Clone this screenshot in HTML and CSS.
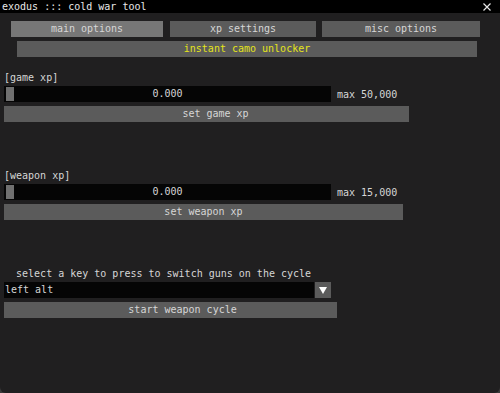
FILE: index.html
```html
<!DOCTYPE html>
<html lang="en">
<head>
    <meta charset="UTF-8">
    <title>exodus ::: cold war tool</title>
    <link rel="stylesheet" href="styles.css">
</head>
<body>

    <!-- Main tool window -->
    <div class="window">
        <div class="title-bar">
            <span class="title">exodus ::: cold war tool</span>
            <svg class="close" width="8" height="8" viewBox="0 0 8 8">
                <path d="M0.5 0.5 L7.5 7.5 M7.5 0.5 L0.5 7.5" stroke="#e6e6e6" stroke-width="1.2"/>
            </svg>
        </div>

        <div class="content">
            <!-- Tabs -->
            <div class="tabs">
                <div class="btn tab tab-main active">main options</div>
                <div class="btn tab tab-xp">xp settings</div>
                <div class="btn tab tab-misc">misc options</div>
            </div>
            <div class="btn camo">instant camo unlocker</div>

            <!-- Game xp -->
            <div class="label label-game">[game xp]</div>
            <div class="slider-row">
                <div class="slider">
                    <div class="grab"></div>
                    <span class="slider-value">0.000</span>
                </div>
                <span class="max">max 50,000</span>
            </div>
            <div class="btn btn-game">   set game xp</div>

            <!-- Weapon xp -->
            <div class="label label-weapon">[weapon xp]</div>
            <div class="slider-row">
                <div class="slider">
                    <div class="grab"></div>
                    <span class="slider-value">0.000</span>
                </div>
                <span class="max">max 15,000</span>
            </div>
            <div class="btn btn-weapon">set weapon xp</div>

            <!-- Weapon cycle -->
            <div class="label label-cycle">  select a key to press to switch guns on the cycle</div>
            <div class="combo">
                <div class="combo-value">left alt</div>
                <div class="combo-arrow">
                    <svg width="8" height="7" viewBox="0 0 8 7">
                        <path d="M0 0 L8 0 L4 7 Z" fill="#ffffff"/>
                    </svg>
                </div>
            </div>
            <div class="btn btn-cycle">    start weapon cycle</div>
        </div>
    </div>

</body>
</html>
```

FILE: styles.css
```css
/* Basic page */
html, body {
    margin: 0;
    height: 100%;
    background-color: #3a3a3a;
}

body {
    font-family: "DejaVu Sans Mono", monospace;
    font-size: 10px;
    color: #d6d6d6;
}

/* Window */
.window {
    width: 500px;
    height: 393px;
    background-color: #201f20;
    border-radius: 0 0 6px 6px;
    display: flex;
    flex-direction: column;
    overflow: hidden;
}

.title-bar {
    height: 13px;
    background-color: #000000;
    display: flex;
    align-items: center;
    justify-content: space-between;
    padding: 0 9px 0 2px;
    color: #e8e8e8;
    line-height: 13px;
}

.close {
    display: block;
}

.content {
    display: flex;
    flex-direction: column;
    padding: 0 4px;
}

/* Buttons */
.btn {
    height: 16px;
    line-height: 16px;
    background-color: #5b5b5b;
    text-align: center;
    white-space: pre;
    color: #d6d6d6;
}

.tabs {
    display: flex;
    margin-top: 8px;
    padding-left: 7px;
}

.tab-main {
    width: 152px;
}

.tab-xp {
    width: 146px;
    margin-left: 7px;
}

.tab-misc {
    width: 158px;
    margin-left: 6px;
}

.tab.active {
    background-color: #777777;
}

.camo {
    width: 460px;
    margin: 4px 0 0 13px;
    color: #e4e41a;
}

.btn-game {
    width: 405px;
    margin-top: 4px;
}

.btn-weapon {
    width: 399px;
    margin-top: 4px;
}

.btn-cycle {
    width: 333px;
    margin-top: 4px;
}

/* Labels */
.label {
    height: 10px;
    line-height: 10px;
    margin-bottom: 3px;
    white-space: pre;
}

.label-game {
    margin-top: 16px;
}

.label-weapon {
    margin-top: 49px;
}

.label-cycle {
    margin-top: 49px;
}

/* Sliders */
.slider-row {
    display: flex;
    align-items: center;
}

.slider {
    width: 327px;
    height: 16px;
    background-color: #050505;
    position: relative;
    display: flex;
    align-items: center;
    justify-content: center;
}

.grab {
    position: absolute;
    left: 2px;
    top: 1px;
    width: 8px;
    height: 14px;
    background-color: #707070;
}

.slider-value {
    line-height: 16px;
}

.max {
    margin-left: 6px;
}

/* Combo box */
.combo {
    display: flex;
    width: 327px;
    height: 16px;
}

.combo-value {
    flex: 1;
    background-color: #050505;
    line-height: 16px;
    padding-left: 1px;
}

.combo-arrow {
    width: 16px;
    margin-left: 1px;
    background-color: #5b5b5b;
    display: flex;
    align-items: center;
    justify-content: center;
}

.combo-arrow svg {
    display: block;
}
```
